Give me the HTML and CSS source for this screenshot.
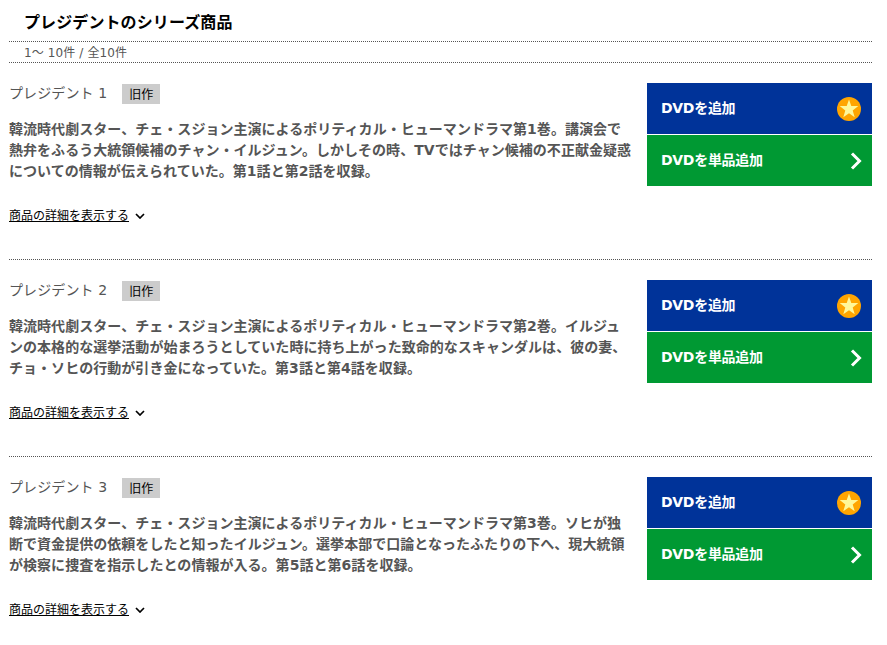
FILE: index.html
```
<!DOCTYPE html>
<html lang="ja">
<head>
    <meta charset="UTF-8">
    <meta name="viewport" content="width=device-width, initial-scale=1.0">
    <title>プレジデントのシリーズ商品</title>
    <link rel="stylesheet" href="styles.css">
</head>
<body>
    <svg class="symbols" aria-hidden="true">
        <symbol id="icon-star" viewBox="0 0 24 24">
            <circle cx="12" cy="12" r="12" fill="#ffa500"/>
            <path d="M12 2.4l2.3 6.6 7 .1-5.6 4.3 2 6.8-5.7-4-5.7 4 2-6.8-5.6-4.3 7-.1z" fill="#fff799"/>
        </symbol>
        <symbol id="icon-arrow" viewBox="0 0 12 18">
            <path d="M2 1.500L9.500 9 2 16.500" fill="none" stroke="#fff" stroke-width="3"/>
        </symbol>
        <symbol id="icon-down" viewBox="0 0 10 6">
            <path d="M1 1l4 4 4-4" fill="none" stroke="#000" stroke-width="1.7"/>
        </symbol>
    </svg>

    <div class="series">
        <h1>プレジデントのシリーズ商品</h1>
        <p class="count">1～ 10件 / 全10件</p>

        <div class="item">
            <div class="item-body">
                <h2>プレジデント 1<span class="tag">旧作</span></h2>
                <p class="description">韓流時代劇スター、チェ・スジョン主演によるポリティカル・ヒューマンドラマ第1巻。講演会で<br>熱弁をふるう大統領候補のチャン・イルジュン。しかしその時、TVではチャン候補の不正献金疑惑<br>についての情報が伝えられていた。第1話と第2話を収録。</p>
                <div class="detail"><a href="#">商品の詳細を表示する</a><svg><use href="#icon-down"/></svg></div>
            </div>
            <div class="buttons">
                <a class="button add" href="#"><span>DVDを追加</span><svg class="star"><use href="#icon-star"/></svg></a>
                <a class="button single" href="#"><span>DVDを単品追加</span><svg class="arrow"><use href="#icon-arrow"/></svg></a>
            </div>
        </div>

        <div class="item">
            <div class="item-body">
                <h2>プレジデント 2<span class="tag">旧作</span></h2>
                <p class="description">韓流時代劇スター、チェ・スジョン主演によるポリティカル・ヒューマンドラマ第2巻。イルジュ<br>ンの本格的な選挙活動が始まろうとしていた時に持ち上がった致命的なスキャンダルは、彼の妻、<br>チョ・ソヒの行動が引き金になっていた。第3話と第4話を収録。</p>
                <div class="detail"><a href="#">商品の詳細を表示する</a><svg><use href="#icon-down"/></svg></div>
            </div>
            <div class="buttons">
                <a class="button add" href="#"><span>DVDを追加</span><svg class="star"><use href="#icon-star"/></svg></a>
                <a class="button single" href="#"><span>DVDを単品追加</span><svg class="arrow"><use href="#icon-arrow"/></svg></a>
            </div>
        </div>

        <div class="item">
            <div class="item-body">
                <h2>プレジデント 3<span class="tag">旧作</span></h2>
                <p class="description">韓流時代劇スター、チェ・スジョン主演によるポリティカル・ヒューマンドラマ第3巻。ソヒが独<br>断で資金提供の依頼をしたと知ったイルジュン。選挙本部で口論となったふたりの下へ、現大統領<br>が検察に捜査を指示したとの情報が入る。第5話と第6話を収録。</p>
                <div class="detail"><a href="#">商品の詳細を表示する</a><svg><use href="#icon-down"/></svg></div>
            </div>
            <div class="buttons">
                <a class="button add" href="#"><span>DVDを追加</span><svg class="star"><use href="#icon-star"/></svg></a>
                <a class="button single" href="#"><span>DVDを単品追加</span><svg class="arrow"><use href="#icon-arrow"/></svg></a>
            </div>
        </div>
    </div>
</body>
</html>
```
FILE: styles.css
```
* {
    box-sizing: border-box;
}
body {
    margin: 0;
    background: #fff;
    color: #555;
    font-family: "DejaVu Sans", "Noto Sans CJK JP", sans-serif;
    font-size: 14px;
}
h1, h2, p {
    margin: 0;
}
.symbols {
    display: none;
}
.series {
    width: 863px;
    margin-left: 9px;
}
h1 {
    height: 41px;
    padding: 10px 15px 0;
    color: #000;
    font-size: 16px;
    line-height: 26px;
    letter-spacing: 0.1px;
}
.count {
    height: 22px;
    padding: 1px 15px 0;
    border-top: 1px dotted #555;
    border-bottom: 1px dotted #555;
    font-size: 12px;
    line-height: 20px;
    letter-spacing: 0.12px;
}
.item {
    display: flex;
    justify-content: space-between;
    height: 197px;
    padding-top: 20px;
    border-bottom: 1px dotted #555;
}
.item:last-child {
    border-bottom: none;
}
h2 {
    display: flex;
    height: 21px;
    font-size: 14px;
    font-weight: normal;
    line-height: 20px;
    letter-spacing: 0.1px;
    white-space: pre;
}
.tag {
    height: 20px;
    margin: 1px 0 0 15px;
    padding: 0 7px;
    background: #ccc;
    color: #000;
    font-size: 12px;
    line-height: 22px;
    letter-spacing: 0;
}
.description {
    margin-top: 15px;
    font-weight: bold;
    line-height: 21px;
    letter-spacing: 0.04px;
    white-space: nowrap;
}
.detail {
    display: flex;
    align-items: center;
    gap: 6px;
    margin-top: 25px;
    font-size: 12px;
    line-height: 18px;
}
.detail a {
    color: #000;
}
.detail svg {
    width: 10px;
    height: 6px;
}
.buttons {
    display: flex;
    flex-direction: column;
    gap: 1px;
    width: 225px;
}
.button {
    display: flex;
    justify-content: space-between;
    align-items: center;
    height: 51px;
    padding: 1px 10px 0 14px;
    color: #fff;
    font-weight: bold;
    letter-spacing: -0.3px;
    text-decoration: none;
}
.button span {
    padding-bottom: 5px;
}
.add {
    background: #003399;
}
.single {
    background: #009933;
}
.star {
    width: 24px;
    height: 24px;
    margin-right: 1px;
}
.arrow {
    width: 12px;
    height: 18px;
}
```
